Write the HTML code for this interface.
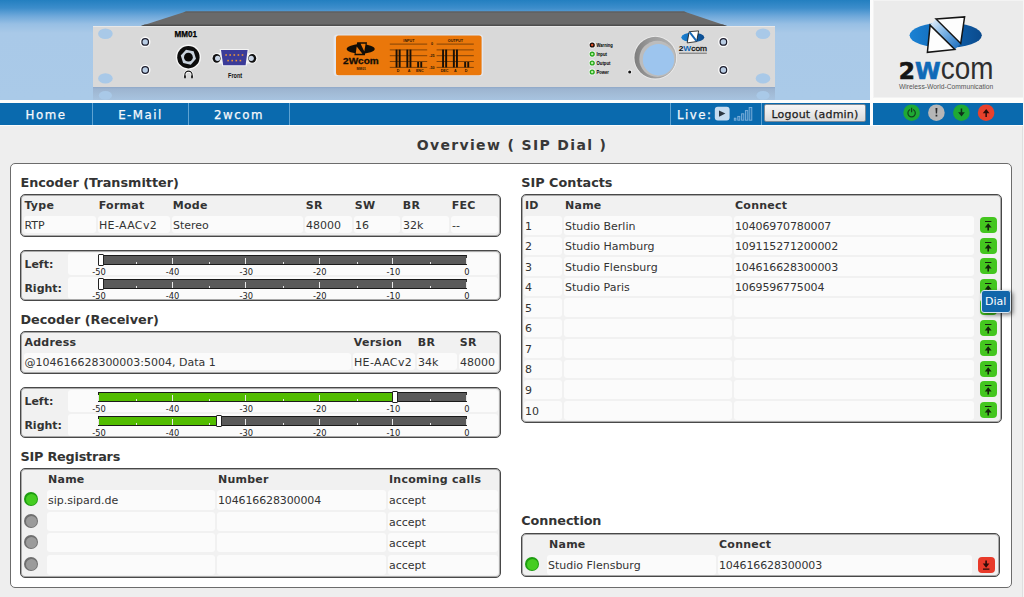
<!DOCTYPE html>
<html lang="en">
<head>
<meta charset="utf-8">
<title>Overview ( SIP Dial )</title>
<style>
html,body{margin:0;padding:0;}
body{width:1024px;height:597px;overflow:hidden;background:#eeeeee;font-family:"DejaVu Sans","Liberation Sans",sans-serif;font-size:11px;color:#333;position:relative;}
#hdr{position:absolute;left:0;top:0;width:870px;height:100px;overflow:hidden;background:linear-gradient(to bottom,#237fc0 0px,#3c8dcb 8px,#6ea8da 16px,#97bfe4 24px,#a9c9e8 33px,#aacae8 100px);}
#hdrgap{position:absolute;left:0;top:100px;width:1024px;height:3px;background:#fdfdfb;}
#logo{position:absolute;left:873px;top:0;width:151px;height:98px;background:#ebebeb;box-shadow:inset 0 0 0 1px #f3f3f3;}
#vgap{position:absolute;left:870px;top:0;width:3px;height:126px;background:#fcfcfc;}
#nav{position:absolute;left:0;top:103px;width:870px;height:22px;background:#0a6aae;box-shadow:0 1px 0 #fbfbfb;}
#stat{position:absolute;left:873px;top:103px;width:151px;height:22px;background:#0a6aae;box-shadow:0 1px 0 #fbfbfb;}
.nv{position:absolute;top:1px;height:22px;line-height:22px;color:#f6f9fc;font-size:11.8px;letter-spacing:1.5px;text-align:center;-webkit-text-stroke:.25px #f6f9fc;}
.sep{position:absolute;top:0;width:1px;height:22px;background:#5fa3d2;}
#ttl{position:absolute;left:0;top:136px;width:1024px;text-align:center;font-weight:bold;font-size:14px;letter-spacing:1.35px;color:#383838;line-height:18px;}
#panel{position:absolute;left:10px;top:163px;width:1000px;height:423px;border:1px solid #6c6c6c;border-radius:5px;background:#fff;}
h3{position:absolute;margin:0;font-size:12.8px;line-height:16px;font-weight:bold;color:#333;white-space:nowrap;}
.box{position:absolute;border:1px solid #484848;border-radius:5px;background:#f1f1f1;box-sizing:border-box;box-shadow:inset 0 0 0 1px rgba(72,72,72,.42);}
.th{position:absolute;font-weight:bold;font-size:11px;letter-spacing:.25px;line-height:14px;color:#333;white-space:nowrap;}
.td{position:absolute;background:#fbfbfb;border-radius:3px;font-size:11px;color:#333;white-space:nowrap;box-sizing:border-box;padding-left:1px;}
.bar{position:absolute;height:10px;box-sizing:border-box;background:#5a5a5a;border:1px solid #1a1a1a;border-right-color:#333;}
.fill{position:absolute;left:0;top:0;height:8px;background:#52bc00;}
  .tk{position:absolute;bottom:0;width:1px;height:6px;background:#e8e8e8;}
.tk.sm{height:2px;}
.hnd{position:absolute;width:6px;height:12px;box-sizing:border-box;border:1px solid #222;border-radius:1px;background:#fff;}
.sc{position:absolute;width:30px;text-align:center;font-size:8.3px;line-height:10px;color:#222;}
.led{position:absolute;width:14px;height:14px;box-sizing:border-box;border-radius:50%;}
.led.g{background:#1d9c10;}
.led.x{background:#6f6f6f;}
.led::after{content:'';position:absolute;left:1.5px;top:1.5px;right:1.5px;bottom:1.5px;border-radius:50%;}
.led.g::after{background:#45cd22;}
.led.x::after{background:#9b9b9b;}
.btn{position:absolute;width:16.5px;height:16px;border-radius:4px;}
.btn svg{display:block;}
.btn.up{background:#44c61f;}
.btn.dn{background:#e83a2a;}
#tip{position:absolute;left:981px;top:290px;width:29.5px;height:23px;box-sizing:border-box;border:1px solid #d8e6f2;border-radius:3px;background:#1266aa;color:#fff;font-size:11px;line-height:21px;text-align:center;box-shadow:2px 2px 4px rgba(0,0,0,.5);}
#logout{position:absolute;left:764px;top:1px;width:102px;height:18px;box-sizing:border-box;border:1px solid #7d8a96;border-radius:2px;background:linear-gradient(#f6f6f6,#e9e9e9 50%,#d9d9d9);color:#1c1c1c;font-size:11px;line-height:19px;text-align:center;letter-spacing:.2px;-webkit-text-stroke:.25px #1c1c1c;}
#edge1{position:absolute;left:1022px;top:126px;width:1px;height:471px;background:#dfdfdf;}
#edge2{position:absolute;left:1023px;top:0;width:1px;height:597px;background:#f5f5f5;}
#hdrgap2{position:absolute;left:873px;top:98px;width:151px;height:5px;background:#fdfdfb;}

</style>
</head>
<body>
<div id="hdr">
<svg width="870" height="100" viewBox="0 0 870 100" style="position:absolute;left:0;top:0;font-family:'Liberation Sans','DejaVu Sans',sans-serif">
  <defs>
    <linearGradient id="refl" x1="0" y1="0" x2="0" y2="1"><stop offset="0" stop-color="#8fa8c8"/><stop offset=".14" stop-color="#9cb4d0"/><stop offset=".5" stop-color="#a2bbd6"/><stop offset="1" stop-color="#a7c3e0"/></linearGradient>
    <linearGradient id="knob" x1="0" y1="0" x2="1" y2="0"><stop offset="0" stop-color="#7e7e7e"/><stop offset=".4" stop-color="#9c9c9c"/><stop offset="1" stop-color="#b4b4b4"/></linearGradient>
    <linearGradient id="band" x1="0" y1="0" x2="1" y2="1"><stop offset="0" stop-color="#eef5fc"/><stop offset=".45" stop-color="#7db4e6"/><stop offset="1" stop-color="#1468ba"/></linearGradient>
    <linearGradient id="ell" x1="0" y1="0" x2="1" y2="0"><stop offset="0" stop-color="#1b82d4"/><stop offset=".55" stop-color="#0f63b0"/><stop offset="1" stop-color="#0b4a8c"/></linearGradient>
  </defs>
  <!-- device top -->
  <polygon points="141,26 186,11.6 684,11.6 727,26" fill="#6a6a6a"/>
  <polygon points="186,11.6 684,11.6 687,12.6 183,12.6" fill="#5a5a5a"/>
  <polygon points="144.5,24.6 723,24.6 727,26 141,26" fill="#4e4e4e"/>
  <!-- front panel -->
  <rect x="93" y="26" width="682" height="61" fill="#d9d9d9"/>
  <rect x="93" y="26" width="682" height="1" fill="#e8e8e8"/>
  <!-- reflection -->
  <rect x="93" y="87" width="682" height="13" fill="url(#refl)"/>
  <ellipse cx="105.4" cy="95.4" rx="6.6" ry="4.3" fill="#a9c9e8"/>
  <ellipse cx="763" cy="95.4" rx="6.6" ry="4.3" fill="#a9c9e8"/>
  <!-- rack holes -->
  <g fill="#a9c9e8">
    <ellipse cx="105.4" cy="33.8" rx="7.3" ry="5.2"/><ellipse cx="105.4" cy="78.4" rx="7.3" ry="5.2"/>
    <ellipse cx="763" cy="33.8" rx="7.3" ry="5.2"/><ellipse cx="763" cy="78.4" rx="7.3" ry="5.2"/>
  </g>
  <!-- screws -->
  <g id="scr">
    <g transform="translate(145.2 41.9)"><circle r="5.3" fill="#fbfbfb"/><circle r="3.9" fill="#1a1a2a"/><circle r="2.7" fill="#b9cde4"/></g>
    <g transform="translate(145.2 70)"><circle r="5.3" fill="#fbfbfb"/><circle r="3.9" fill="#1a1a2a"/><circle r="2.7" fill="#b9cde4"/></g>
    <g transform="translate(723.4 41.9)"><circle r="5.3" fill="#fbfbfb"/><circle r="3.9" fill="#1a1a2a"/><circle r="2.7" fill="#b9cde4"/></g>
    <g transform="translate(723.4 70)"><circle r="5.3" fill="#fbfbfb"/><circle r="3.9" fill="#1a1a2a"/><circle r="2.7" fill="#b9cde4"/></g>
  </g>
  <!-- MM01 + jack -->
  <text x="174.5" y="37.2" font-size="8.2" font-weight="bold" fill="#000" stroke="#000" stroke-width=".25" textLength="22.5" lengthAdjust="spacingAndGlyphs">MM01</text>
  <circle cx="188.4" cy="57.2" r="12.6" fill="#f6f6f6"/>
  <circle cx="188.4" cy="57.2" r="11.2" fill="#0c0c0c"/>
  <polygon points="196.2,57.2 192.3,64 184.5,64 180.6,57.2 184.5,50.4 192.3,50.4" fill="#c9d3de" transform="rotate(12 188.4 57.2)"/>
  <circle cx="188.4" cy="57.2" r="4.4" fill="#080808"/>
  <path d="M184.9 77.3v-2.6a3.6 3.6 0 0 1 7.2 0v2.6" fill="none" stroke="#fff" stroke-width="2.6"/>
  <path d="M184.9 77.3v-2.6a3.6 3.6 0 0 1 7.2 0v2.6" fill="none" stroke="#111" stroke-width="1.1"/>
  <path d="M184.2 75.6h1.6v2.6h-1.6zM191.2 75.6h1.6v2.6h-1.6z" fill="#111"/>
  <!-- DB9 -->
  <g>
    <rect x="211.5" y="53" width="46" height="10.6" rx="5.3" fill="#f4f4f4"/>
    <ellipse cx="216.6" cy="58.3" rx="4" ry="4.4" fill="#111"/><circle cx="217.6" cy="58.3" r="2.6" fill="#c9d5e6"/>
    <ellipse cx="252.2" cy="58.3" rx="4" ry="4.4" fill="#111"/><circle cx="251.2" cy="58.3" r="2.6" fill="#c9d5e6"/>
    <path d="M219.6 48.9h29.2l-2.2 17.4h-24.4z" fill="#f4f4f4"/>
    <path d="M221 50h26.6l-2 15.2h-22.4z" fill="#3b3b98"/>
    <g fill="#e8933a"><rect x="225.3" y="54.2" width="1.6" height="1.6"/><rect x="229.4" y="54.2" width="1.6" height="1.6"/><rect x="233.5" y="54.2" width="1.6" height="1.6"/><rect x="237.6" y="54.2" width="1.6" height="1.6"/><rect x="241.7" y="54.2" width="1.6" height="1.6"/>
    <rect x="227.3" y="59.8" width="1.6" height="1.6"/><rect x="231.4" y="59.8" width="1.6" height="1.6"/><rect x="235.5" y="59.8" width="1.6" height="1.6"/><rect x="239.6" y="59.8" width="1.6" height="1.6"/></g>
  </g>
  <text x="228" y="77.5" font-size="6.4" font-weight="bold" fill="#111" textLength="14.2" lengthAdjust="spacingAndGlyphs">Front</text>
  <!-- display -->
  <rect x="333.6" y="34.4" width="149.6" height="41.6" rx="3.5" fill="#e3e7ee"/>
  <rect x="336" y="35.4" width="145.6" height="39.8" rx="2.5" fill="#ea770a"/>
  <ellipse cx="360.7" cy="48.9" rx="14" ry="4.6" fill="#120d06"/>
  <path d="M357.2 42.3h9.8l-2.1 12.9h-10.6z" fill="#120d06"/>
  <path d="M360.6 43.8h5l-1.3 7.6zM356.7 46.6l-1 7.2h6.7z" fill="#ea770a"/>
  <text x="343.1" y="64.3" font-size="9.4" font-weight="bold" fill="#120d06" stroke="#120d06" stroke-width=".3" textLength="35.6" lengthAdjust="spacingAndGlyphs">2Wcom</text>
  <text x="356.4" y="70.2" font-size="4.2" font-weight="bold" fill="#2a1a08" textLength="9.6" lengthAdjust="spacingAndGlyphs">MM01</text>
  <g stroke="#3a2006" stroke-width=".6" fill="none">
    <path d="M389.8 44.1h37.4M389.8 49.9h37.4M389.8 55.7h37.4M389.8 61.5h37.4M389.8 67.4h37.4"/>
    <path d="M436.6 44.1h37.2M436.6 49.9h37.2M436.6 55.7h37.2M436.6 61.5h37.2M436.6 67.4h37.2"/>
  </g>
  <g fill="#1a1006">
    <rect x="395.6" y="49.6" width="1.9" height="17.8"/><rect x="398.7" y="49.6" width="1.9" height="17.8"/>
    <rect x="406.4" y="49.6" width="1.9" height="17.8"/><rect x="409.5" y="49.6" width="1.9" height="17.8"/>
    <rect x="417.2" y="61.9" width="1.9" height="5.5"/><rect x="420.3" y="61.9" width="1.9" height="5.5"/>
    <rect x="442.1" y="49.6" width="1.9" height="17.8"/><rect x="445.2" y="49.6" width="1.9" height="17.8"/>
    <rect x="452.9" y="49.6" width="1.9" height="17.8"/><rect x="456" y="49.6" width="1.9" height="17.8"/>
    <rect x="464.2" y="61.9" width="1.9" height="5.5"/><rect x="467.3" y="61.9" width="1.9" height="5.5"/>
  </g>
  <g font-size="3.7" font-weight="bold" fill="#2a1604" text-anchor="middle">
    <text x="408.9" y="42.4">INPUT</text><text x="455.4" y="42.4">OUTPUT</text>
    <text x="432" y="45.4">0</text><text x="432" y="57">-25</text><text x="432" y="68.7">-50</text>
    <text x="398" y="72.3">D</text><text x="409" y="72.3">A</text><text x="419.8" y="72.3">ENC</text>
    <text x="444.6" y="72.3">DEC</text><text x="455.4" y="72.3">A</text><text x="466.2" y="72.3">D</text>
  </g>
  <!-- LEDs -->
  <g>
    <circle cx="592.2" cy="45" r="3.4" fill="#f6f6f6"/><circle cx="592.2" cy="45" r="2.6" fill="#1a0c08"/><circle cx="592.2" cy="45" r="1.2" fill="#e0522a"/>
    <circle cx="592.2" cy="54.1" r="3.4" fill="#f6f6f6"/><circle cx="592.2" cy="54.1" r="2.6" fill="#27a81c"/><circle cx="592.2" cy="54.1" r="1.2" fill="#bdf0a8"/>
    <circle cx="592.2" cy="63" r="3.4" fill="#f6f6f6"/><circle cx="592.2" cy="63" r="2.6" fill="#27a81c"/><circle cx="592.2" cy="63" r="1.2" fill="#bdf0a8"/>
    <circle cx="592.2" cy="72" r="3.4" fill="#f6f6f6"/><circle cx="592.2" cy="72" r="2.6" fill="#27a81c"/><circle cx="592.2" cy="72" r="1.2" fill="#bdf0a8"/>
  </g>
  <g font-size="5.4" font-weight="bold" fill="#000">
    <text x="596.5" y="47.2" textLength="16.4" lengthAdjust="spacingAndGlyphs">Warning</text><text x="596.5" y="56.3" textLength="10.5" lengthAdjust="spacingAndGlyphs">Input</text><text x="596.5" y="65.2" textLength="14" lengthAdjust="spacingAndGlyphs">Output</text><text x="596.5" y="74.2" textLength="12.5" lengthAdjust="spacingAndGlyphs">Power</text>
  </g>
  <circle cx="629.7" cy="71.9" r="2.3" fill="#f4f4f4"/><circle cx="629.7" cy="71.9" r="1.5" fill="#111"/>
  <!-- knob -->
  <circle cx="655.3" cy="57.7" r="21.7" fill="#ececec"/>
  <circle cx="655.3" cy="57.7" r="20.9" fill="url(#knob)"/>
  <circle cx="657.4" cy="58.9" r="18.1" fill="#bcbcbc"/>
  <circle cx="658.5" cy="59.7" r="15.7" fill="#9dc5ee"/>
  <!-- small logo -->
  <ellipse cx="692.8" cy="37.4" rx="11.5" ry="4.7" fill="url(#ell)"/>
  <path d="M689.2 31.7l9.4-.8-2 10.7-9.4 1.3z" fill="#fff" stroke="#111" stroke-width=".8"/>
  <path d="M689.6 32.2l6.8 8.6" stroke="#1767b4" stroke-width="1.9" fill="none"/>
  <text x="678.7" y="50.8" font-size="8" font-weight="bold" fill="#0c0c0c" textLength="28.4" lengthAdjust="spacingAndGlyphs">2<tspan fill="#0f66b4">W</tspan><tspan font-weight="normal" fill="#141414" stroke="#141414" stroke-width=".3">com</tspan></text>
  <rect x="679" y="52.7" width="27.8" height="1" fill="#6e6e6e"/>
</svg>
</div>
<div id="logo">
<svg width="151" height="98" viewBox="873 0 151 98" style="position:absolute;left:0;top:0">
  <ellipse cx="945.7" cy="35.3" rx="36.1" ry="12.7" fill="url(#ell)"/>
  <path d="M930.1 25.1L936 19l24.7 24.5-5.9 5.9z" fill="url(#band)"/>
  <path d="M936 19l28.6-2.1-3.9 26.6z" fill="#fdfdfd" stroke="#141414" stroke-width="1.5" stroke-linejoin="miter"/>
  <path d="M930.1 25.1l-2.7 27.2 27.4-2.9z" fill="#fdfdfd" stroke="#141414" stroke-width="1.5" stroke-linejoin="miter"/>
  <text x="898.8" y="78.6" font-family="'DejaVu Sans','Liberation Sans',sans-serif" font-size="23.6" font-weight="bold" fill="#151515" stroke="#151515" stroke-width=".7" textLength="41.8" lengthAdjust="spacingAndGlyphs">2<tspan fill="#0f6ab8" stroke="#0f6ab8">W</tspan></text>
  <text x="940.8" y="78.6" font-family="'Liberation Sans','DejaVu Sans',sans-serif" font-size="30.5" fill="#2e2e2e" textLength="52.6" lengthAdjust="spacingAndGlyphs">com</text>
  <text x="899" y="89.1" font-family="'Liberation Sans','DejaVu Sans',sans-serif" font-size="8" fill="#555" textLength="94.3" lengthAdjust="spacingAndGlyphs">Wireless-World-Communication</text>
</svg>
</div>
<div id="hdrgap"></div><div id="hdrgap2"></div>
<div id="nav">
  <div class="nv" style="left:0;width:92px">Home</div><div class="sep" style="left:92px"></div>
  <div class="nv" style="left:93px;width:95px">E-Mail</div><div class="sep" style="left:188px"></div>
  <div class="nv" style="left:189px;width:100px">2wcom</div><div class="sep" style="left:289px"></div>
  <div class="sep" style="left:670px"></div>
  <div class="nv" style="left:677px;text-align:left">Live:</div>
  <svg width="40" height="22" viewBox="713 103 40 22" style="position:absolute;left:713px;top:0">
    <rect x="714.8" y="106.8" width="14.8" height="13.7" rx="3" fill="#c6dcf0"/>
    <path d="M719 110.4l6.4 3.2-6.4 3.2z" fill="#2c3640"/>
    <g fill="#2677b8" stroke="#7fb2dc" stroke-width=".9" transform="translate(0 .6)">
      <rect x="734.3" y="117.6" width="1.6" height="2"/><rect x="737.8" y="115.8" width="2" height="3.8"/><rect x="741.6" y="113.2" width="2.2" height="6.4"/><rect x="745.4" y="110" width="2.4" height="9.6"/><rect x="749.2" y="106.9" width="2.6" height="12.7"/>
    </g>
  </svg>
  <div class="sep" style="left:761px"></div>
  <div id="logout">Logout (admin)</div>
</div>
<div id="stat">
<svg width="151" height="22" viewBox="873 103 151 22" style="position:absolute;left:0;top:0">
  <circle cx="911.6" cy="112.7" r="8.3" fill="#1fa935"/>
  <circle cx="911.6" cy="113.1" r="3.7" fill="none" stroke="#13401c" stroke-width="1.2"/>
  <path d="M911.6 107.6v4.6" stroke="#1fa935" stroke-width="3"/><path d="M911.6 107.8v4.4" stroke="#13401c" stroke-width="1.2"/>
  <circle cx="936.4" cy="112.7" r="8.3" fill="#b6b6b6"/>
  <path d="M935.5 108h1.9l-.3 5.6h-1.3zM935.6 114.8h1.7v1.8h-1.7z" fill="#2a2a2a"/>
  <circle cx="961.4" cy="112.7" r="8.3" fill="#1fa935"/>
  <path d="M960.7 108.6h1.5v3.6h2.6l-3.3 4.2-3.4-4.2h2.6z" fill="#10301a"/>
  <circle cx="986.1" cy="112.7" r="8.3" fill="#e8412c"/>
  <path d="M985.4 117h1.5v-3.8h2.6l-3.3-4.2-3.4 4.2h2.6z" fill="#2a0e0a"/>
</svg>
</div>
<div id="vgap"></div>

<div id="ttl">Overview ( SIP Dial )</div>
<div id="panel"></div>
<div id="edge1"></div><div id="edge2"></div>
<h3 style="left:20.4px;top:175px;letter-spacing:0px">Encoder (Transmitter)</h3>
<div class="box" style="left:20px;top:194px;width:481px;height:43px"></div>
<div class="th" style="left:24.4px;top:199px;">Type</div><div class="td" style="left:24px;top:216px;width:72px;height:17px;line-height:19px;padding-left:.4px">RTP</div><div class="th" style="left:98.8px;top:199px;">Format</div><div class="td" style="left:98px;top:216px;width:72px;height:17px;line-height:19px;"><span style="letter-spacing:.35px">HE-AACv2</span></div><div class="th" style="left:172.8px;top:199px;">Mode</div><div class="td" style="left:172px;top:216px;width:131px;height:17px;line-height:19px;">Stereo</div><div class="th" style="left:305.8px;top:199px;">SR</div><div class="td" style="left:305px;top:216px;width:47px;height:17px;line-height:19px;">48000</div><div class="th" style="left:354.8px;top:199px;">SW</div><div class="td" style="left:354px;top:216px;width:46px;height:17px;line-height:19px;">16</div><div class="th" style="left:402.8px;top:199px;">BR</div><div class="td" style="left:402px;top:216px;width:47px;height:17px;line-height:19px;">32k</div><div class="th" style="left:451.8px;top:199px;">FEC</div><div class="td" style="left:451px;top:216px;width:47px;height:17px;line-height:19px;">--</div>
<div class="box" style="left:20px;top:250px;width:481px;height:51px"></div><div class="th" style="left:24.4px;top:258px;letter-spacing:0">Left:</div><div class="td" style="left:68px;top:253px;width:430px;height:22px"></div><div class="bar" style="left:98px;top:255px;width:369px"><i class="tk" style="left:-1px"></i><i class="tk sm" style="left:37px"></i><i class="tk" style="left:73px"></i><i class="tk sm" style="left:110px"></i><i class="tk" style="left:146px"></i><i class="tk sm" style="left:184px"></i><i class="tk" style="left:220px"></i><i class="tk sm" style="left:258px"></i><i class="tk" style="left:293px"></i><i class="tk sm" style="left:331px"></i><i class="tk" style="left:367px"></i></div><div class="hnd" style="left:98px;top:254px"></div><div class="sc" style="left:84.0px;top:267px">-50</div><div class="sc" style="left:157.6px;top:267px">-40</div><div class="sc" style="left:231.2px;top:267px">-30</div><div class="sc" style="left:304.8px;top:267px">-20</div><div class="sc" style="left:378.4px;top:267px">-10</div><div class="sc" style="left:452.0px;top:267px">0</div><div class="th" style="left:24.4px;top:282px;letter-spacing:0">Right:</div><div class="td" style="left:68px;top:277px;width:430px;height:22px"></div><div class="bar" style="left:98px;top:279px;width:369px"><i class="tk" style="left:-1px"></i><i class="tk sm" style="left:37px"></i><i class="tk" style="left:73px"></i><i class="tk sm" style="left:110px"></i><i class="tk" style="left:146px"></i><i class="tk sm" style="left:184px"></i><i class="tk" style="left:220px"></i><i class="tk sm" style="left:258px"></i><i class="tk" style="left:293px"></i><i class="tk sm" style="left:331px"></i><i class="tk" style="left:367px"></i></div><div class="hnd" style="left:98px;top:278px"></div><div class="sc" style="left:84.0px;top:291px">-50</div><div class="sc" style="left:157.6px;top:291px">-40</div><div class="sc" style="left:231.2px;top:291px">-30</div><div class="sc" style="left:304.8px;top:291px">-20</div><div class="sc" style="left:378.4px;top:291px">-10</div><div class="sc" style="left:452.0px;top:291px">0</div>
<h3 style="left:20.4px;top:312px;letter-spacing:0px">Decoder (Receiver)</h3>
<div class="box" style="left:20px;top:331px;width:481px;height:43px"></div>
<div class="th" style="left:24.4px;top:336px;">Address</div><div class="td" style="left:24px;top:353px;width:327px;height:17px;line-height:19px;padding-left:.4px">@104616628300003:5004, Data 1</div><div class="th" style="left:353.8px;top:336px;">Version</div><div class="td" style="left:353px;top:353px;width:62px;height:17px;line-height:19px;"><span style="letter-spacing:.35px">HE-AACv2</span></div><div class="th" style="left:417.8px;top:336px;">BR</div><div class="td" style="left:417px;top:353px;width:40px;height:17px;line-height:19px;">34k</div><div class="th" style="left:459.8px;top:336px;">SR</div><div class="td" style="left:459px;top:353px;width:39px;height:17px;line-height:19px;">48000</div>
<div class="box" style="left:20px;top:387px;width:481px;height:51px"></div><div class="th" style="left:24.4px;top:395px;letter-spacing:0">Left:</div><div class="td" style="left:68px;top:390px;width:430px;height:22px"></div><div class="bar" style="left:98px;top:392px;width:369px"><div class="fill" style="width:294px"></div><i class="tk" style="left:-1px"></i><i class="tk sm" style="left:37px"></i><i class="tk" style="left:73px"></i><i class="tk sm" style="left:110px"></i><i class="tk" style="left:146px"></i><i class="tk sm" style="left:184px"></i><i class="tk" style="left:220px"></i><i class="tk sm" style="left:258px"></i><i class="tk" style="left:293px"></i><i class="tk sm" style="left:331px"></i><i class="tk" style="left:367px"></i></div><div class="hnd" style="left:392px;top:391px"></div><div class="sc" style="left:84.0px;top:404px">-50</div><div class="sc" style="left:157.6px;top:404px">-40</div><div class="sc" style="left:231.2px;top:404px">-30</div><div class="sc" style="left:304.8px;top:404px">-20</div><div class="sc" style="left:378.4px;top:404px">-10</div><div class="sc" style="left:452.0px;top:404px">0</div><div class="th" style="left:24.4px;top:419px;letter-spacing:0">Right:</div><div class="td" style="left:68px;top:414px;width:430px;height:22px"></div><div class="bar" style="left:98px;top:416px;width:369px"><div class="fill" style="width:118px"></div><i class="tk" style="left:-1px"></i><i class="tk sm" style="left:37px"></i><i class="tk" style="left:73px"></i><i class="tk sm" style="left:110px"></i><i class="tk" style="left:146px"></i><i class="tk sm" style="left:184px"></i><i class="tk" style="left:220px"></i><i class="tk sm" style="left:258px"></i><i class="tk" style="left:293px"></i><i class="tk sm" style="left:331px"></i><i class="tk" style="left:367px"></i></div><div class="hnd" style="left:216px;top:415px"></div><div class="sc" style="left:84.0px;top:428px">-50</div><div class="sc" style="left:157.6px;top:428px">-40</div><div class="sc" style="left:231.2px;top:428px">-30</div><div class="sc" style="left:304.8px;top:428px">-20</div><div class="sc" style="left:378.4px;top:428px">-10</div><div class="sc" style="left:452.0px;top:428px">0</div>
<h3 style="left:20.4px;top:449px;letter-spacing:-0.2px">SIP Registrars</h3>
<div class="box" style="left:20px;top:468px;width:481px;height:110px"></div>
<div class="th" style="left:48px;top:473px;">Name</div>
<div class="th" style="left:218px;top:473px;">Number</div>
<div class="th" style="left:389px;top:473px;">Incoming calls</div>
<div class="led g" style="left:24px;top:492px"></div>
<div class="td" style="left:47px;top:490px;width:168px;height:20px;line-height:22px;">sip.sipard.de</div>
<div class="td" style="left:217px;top:490px;width:169px;height:20px;line-height:22px;letter-spacing:-.13px">104616628300004</div>
<div class="td" style="left:388px;top:490px;width:110px;height:20px;line-height:22px;">accept</div>
<div class="led x" style="left:24px;top:514px"></div>
<div class="td" style="left:47px;top:512px;width:168px;height:19px;line-height:21px;"></div>
<div class="td" style="left:217px;top:512px;width:169px;height:19px;line-height:21px;letter-spacing:-.13px"></div>
<div class="td" style="left:388px;top:512px;width:110px;height:19px;line-height:21px;">accept</div>
<div class="led x" style="left:24px;top:535px"></div>
<div class="td" style="left:47px;top:533px;width:168px;height:19px;line-height:21px;"></div>
<div class="td" style="left:217px;top:533px;width:169px;height:19px;line-height:21px;letter-spacing:-.13px"></div>
<div class="td" style="left:388px;top:533px;width:110px;height:19px;line-height:21px;">accept</div>
<div class="led x" style="left:24px;top:557px"></div>
<div class="td" style="left:47px;top:555px;width:168px;height:20px;line-height:22px;"></div>
<div class="td" style="left:217px;top:555px;width:169px;height:20px;line-height:22px;letter-spacing:-.13px"></div>
<div class="td" style="left:388px;top:555px;width:110px;height:20px;line-height:22px;">accept</div>
<h3 style="left:521.3px;top:175px;letter-spacing:0px">SIP Contacts</h3>
<div class="box" style="left:521px;top:194px;width:481px;height:229px"></div>
<div class="th" style="left:525px;top:199px;">ID</div>
<div class="th" style="left:565px;top:199px;">Name</div>
<div class="th" style="left:735px;top:199px;">Connect</div>
<div class="td" style="left:524px;top:216px;width:38px;height:19px;line-height:21px;">1</div>
<div class="td" style="left:564px;top:216px;width:168px;height:19px;line-height:21px;">Studio Berlin</div>
<div class="td" style="left:734px;top:216px;width:240px;height:19px;line-height:21px;letter-spacing:-.13px">10406970780007</div>
<div class="btn up" style="left:980px;top:217px"><svg width="16" height="16" viewBox="0 0 16 16"><path d="M5 4h6.4v1.1H5zM8.2 6.2l3.4 4.2H9v3H7.4v-3H4.8z" fill="#14240c"/></svg></div>
<div class="td" style="left:524px;top:237px;width:38px;height:18px;line-height:20px;">2</div>
<div class="td" style="left:564px;top:237px;width:168px;height:18px;line-height:20px;">Studio Hamburg</div>
<div class="td" style="left:734px;top:237px;width:240px;height:18px;line-height:20px;letter-spacing:-.13px">109115271200002</div>
<div class="btn up" style="left:980px;top:238px"><svg width="16" height="16" viewBox="0 0 16 16"><path d="M5 4h6.4v1.1H5zM8.2 6.2l3.4 4.2H9v3H7.4v-3H4.8z" fill="#14240c"/></svg></div>
<div class="td" style="left:524px;top:257px;width:38px;height:19px;line-height:21px;">3</div>
<div class="td" style="left:564px;top:257px;width:168px;height:19px;line-height:21px;">Studio Flensburg</div>
<div class="td" style="left:734px;top:257px;width:240px;height:19px;line-height:21px;letter-spacing:-.13px">104616628300003</div>
<div class="btn up" style="left:980px;top:258px"><svg width="16" height="16" viewBox="0 0 16 16"><path d="M5 4h6.4v1.1H5zM8.2 6.2l3.4 4.2H9v3H7.4v-3H4.8z" fill="#14240c"/></svg></div>
<div class="td" style="left:524px;top:278px;width:38px;height:18px;line-height:20px;">4</div>
<div class="td" style="left:564px;top:278px;width:168px;height:18px;line-height:20px;">Studio Paris</div>
<div class="td" style="left:734px;top:278px;width:240px;height:18px;line-height:20px;letter-spacing:-.13px">1069596775004</div>
<div class="btn up" style="left:980px;top:279px"><svg width="16" height="16" viewBox="0 0 16 16"><path d="M5 4h6.4v1.1H5zM8.2 6.2l3.4 4.2H9v3H7.4v-3H4.8z" fill="#14240c"/></svg></div>
<div class="td" style="left:524px;top:298px;width:38px;height:19px;line-height:21px;">5</div>
<div class="td" style="left:564px;top:298px;width:168px;height:19px;line-height:21px;"></div>
<div class="td" style="left:734px;top:298px;width:240px;height:19px;line-height:21px;letter-spacing:-.13px"></div>
<div class="btn up" style="left:980px;top:299px"><svg width="16" height="16" viewBox="0 0 16 16"><path d="M5 4h6.4v1.1H5zM8.2 6.2l3.4 4.2H9v3H7.4v-3H4.8z" fill="#14240c"/></svg></div>
<div class="td" style="left:524px;top:319px;width:38px;height:18px;line-height:20px;">6</div>
<div class="td" style="left:564px;top:319px;width:168px;height:18px;line-height:20px;"></div>
<div class="td" style="left:734px;top:319px;width:240px;height:18px;line-height:20px;letter-spacing:-.13px"></div>
<div class="btn up" style="left:980px;top:320px"><svg width="16" height="16" viewBox="0 0 16 16"><path d="M5 4h6.4v1.1H5zM8.2 6.2l3.4 4.2H9v3H7.4v-3H4.8z" fill="#14240c"/></svg></div>
<div class="td" style="left:524px;top:339px;width:38px;height:19px;line-height:21px;">7</div>
<div class="td" style="left:564px;top:339px;width:168px;height:19px;line-height:21px;"></div>
<div class="td" style="left:734px;top:339px;width:240px;height:19px;line-height:21px;letter-spacing:-.13px"></div>
<div class="btn up" style="left:980px;top:340px"><svg width="16" height="16" viewBox="0 0 16 16"><path d="M5 4h6.4v1.1H5zM8.2 6.2l3.4 4.2H9v3H7.4v-3H4.8z" fill="#14240c"/></svg></div>
<div class="td" style="left:524px;top:360px;width:38px;height:18px;line-height:20px;">8</div>
<div class="td" style="left:564px;top:360px;width:168px;height:18px;line-height:20px;"></div>
<div class="td" style="left:734px;top:360px;width:240px;height:18px;line-height:20px;letter-spacing:-.13px"></div>
<div class="btn up" style="left:980px;top:361px"><svg width="16" height="16" viewBox="0 0 16 16"><path d="M5 4h6.4v1.1H5zM8.2 6.2l3.4 4.2H9v3H7.4v-3H4.8z" fill="#14240c"/></svg></div>
<div class="td" style="left:524px;top:380px;width:38px;height:19px;line-height:21px;">9</div>
<div class="td" style="left:564px;top:380px;width:168px;height:19px;line-height:21px;"></div>
<div class="td" style="left:734px;top:380px;width:240px;height:19px;line-height:21px;letter-spacing:-.13px"></div>
<div class="btn up" style="left:980px;top:381px"><svg width="16" height="16" viewBox="0 0 16 16"><path d="M5 4h6.4v1.1H5zM8.2 6.2l3.4 4.2H9v3H7.4v-3H4.8z" fill="#14240c"/></svg></div>
<div class="td" style="left:524px;top:401px;width:38px;height:19px;line-height:21px;">10</div>
<div class="td" style="left:564px;top:401px;width:168px;height:19px;line-height:21px;"></div>
<div class="td" style="left:734px;top:401px;width:240px;height:19px;line-height:21px;letter-spacing:-.13px"></div>
<div class="btn up" style="left:980px;top:402px"><svg width="16" height="16" viewBox="0 0 16 16"><path d="M5 4h6.4v1.1H5zM8.2 6.2l3.4 4.2H9v3H7.4v-3H4.8z" fill="#14240c"/></svg></div>
<div id="tip">Dial</div>
<h3 style="left:521.3px;top:513px;letter-spacing:-0.1px">Connection</h3>
<div class="box" style="left:521px;top:533px;width:479px;height:44px"></div>
<div class="th" style="left:549px;top:538px;">Name</div>
<div class="th" style="left:719px;top:538px;">Connect</div>
<div class="led g" style="left:525px;top:557px"></div>
<div class="td" style="left:547px;top:555px;width:169px;height:20px;line-height:22px;">Studio Flensburg</div>
<div class="td" style="left:718px;top:555px;width:254px;height:20px;line-height:22px;letter-spacing:-.13px">104616628300003</div>
<div class="btn dn" style="left:978px;top:557px"><svg width="16" height="16" viewBox="0 0 16 16"><path d="M7.3 3.6h1.6v3h2.5L8.1 10.8 4.8 6.6h2.5zM5 11.6h6.4v1.1H5z" fill="#2a0c0a"/></svg></div>
</body>
</html>
